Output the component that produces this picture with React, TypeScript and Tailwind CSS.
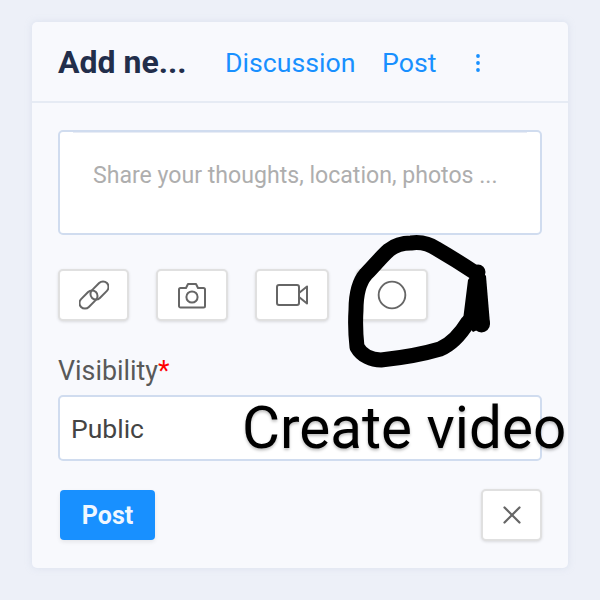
import { Circle, X } from "lucide-react";

const iconButton = "flex h-[52px] items-center justify-center rounded-[5px] border-2 border-[#e0e0e0] bg-white text-[#666666] shadow-[0_1px_3px_rgba(0,0,0,0.12)]";

export default function App() {
  return (
    <div className="relative h-[600px] w-[600px] overflow-hidden bg-[#edf0f8] pt-[22px] font-['Roboto',sans-serif]">
      <div className="mx-auto h-[546px] w-[536px] rounded-[5px] bg-[#f8f9fd] shadow-[0_0_6px_rgba(200,210,230,0.5)]">
        <div className="flex h-[81px] items-center border-b-2 border-[#e6ebf4] pl-[26px]">
          <span className="w-[167px] text-[32px] font-bold leading-none text-[#222e4b]">Add ne...</span>
          <span className="mt-[3px] w-[158px] text-[26.7px] text-[#1890ff]">Discussion</span>
          <span className="mt-[3px] w-[92px] text-[26.7px] -translate-x-[1px] text-[#1890ff]">Post</span>
          <svg className="mt-[3px]" width="6" height="20" viewBox="0 0 6 20" fill="#1890ff">
            <circle cx="3" cy="3" r="1.9" />
            <circle cx="3" cy="10" r="1.9" />
            <circle cx="3" cy="17" r="1.9" />
          </svg>
        </div>
        <div className="px-[26px] pt-[27px]">
          <div className="h-[105px] rounded-[5px] border-2 border-[#d0dcef] bg-white">
            <div className="mx-[13px] h-[1px] bg-[#e8ecf5]" />
            <div className="pl-[33px] pt-[27px] text-[23.1px] leading-[32px] text-[#aeaeae]">
              Share your thoughts, location, photos ...
            </div>
          </div>
          <div className="mt-[34px] flex">
            <div className={`${iconButton} w-[71px]`}>
              <svg width="30" height="30" viewBox="0 0 30 30" fill="none" stroke="currentColor" strokeWidth="2">
                <rect x="-4" y="19" width="21" height="11" rx="5.5" transform="rotate(-45 9.5 19.5) translate(3 -5)" />
                <rect x="12" y="5" width="21" height="11" rx="5.5" transform="rotate(-45 20.5 10.5) translate(-2 0)" />
              </svg>
            </div>
            <div className={`${iconButton} ml-[27px] w-[72px]`}>
              <svg width="30" height="27" viewBox="0 0 30 27" fill="none" stroke="currentColor" strokeWidth="2" strokeLinejoin="round">
                <path d="M2 7.5 C2 6.5 2.7 6 3.5 6 L9 6 L11 2 L19 2 L21 6 L26.5 6 C27.3 6 28 6.5 28 7.5 L28 24 C28 25 27.3 25.5 26.5 25.5 L3.5 25.5 C2.7 25.5 2 25 2 24 Z" />
                <circle cx="15" cy="15" r="5.6" />
              </svg>
            </div>
            <div className={`${iconButton} ml-[27px] w-[74px]`}>
              <svg width="34" height="24" viewBox="0 0 34 24" fill="none" stroke="currentColor" strokeWidth="2" strokeLinejoin="round">
                <rect x="2" y="2" width="22" height="20" rx="2" />
                <path d="M24 10 L32 3.5 L32 20.5 L24 14" />
              </svg>
            </div>
            <div className={`${iconButton} ml-[27px] w-[72px]`}><Circle className="h-[32px] w-[32px]" strokeWidth={1.4} /></div>
          </div>
          <div className="mt-[33px] text-[26.8px] leading-[34px] text-[#595959]">
            Visibility<span className="text-[#ff0000]">*</span>
          </div>
          <div className="mt-[7px] flex h-[66px] items-center rounded-[5px] border-2 border-[#d0dcef] bg-white pl-[11px] pt-[2px] text-[26.5px] text-[#444444]">
            Public
          </div>
          <div className="mt-[28px] flex items-center justify-between">
            <div className="ml-[2px] flex h-[50px] w-[95px] items-center justify-center rounded-[4px] bg-[#1890ff] pt-[1px] text-[25px] font-bold text-[#f0f7ff] shadow-[0_2px_4px_rgba(0,0,0,0.08)]">
              Post
            </div>
            <div className={`${iconButton} w-[61px]`}>
              <X className="h-[30px] w-[30px]" strokeWidth={1.8} />
            </div>
          </div>
        </div>
      </div>
      <svg className="absolute left-0 top-0" width="600" height="600" viewBox="0 0 600 600" fill="none">
        <path
          d="M474 272 C462 264 449 256 437 249 C428 243 418 242 411 243 C402 243 394 246 389 250 C382 256 374 266 366 274 C359 282 356 295 356 310 C355 325 356 338 357 347 C362 356 372 360 381 360 C400 358 420 355 440 349 C452 344 460 335 468 322"
          stroke="#000"
          strokeWidth="15"
          strokeLinecap="round"
          strokeLinejoin="round"
        />
        <path d="M478 266 L486 276 L490 324 L473 332 L463 320 L468 280 Z" fill="#000" />
        <circle cx="478" cy="272" r="7.5" fill="#000" />
        <circle cx="481.5" cy="324" r="8.5" fill="#000" />
      </svg>
      <div className="absolute left-[242px] top-[394px] text-[58.4px] leading-[68px] whitespace-nowrap text-black [text-shadow:0_2px_3px_rgba(0,0,0,0.25)]">
        Create video
      </div>
    </div>
  );
}
